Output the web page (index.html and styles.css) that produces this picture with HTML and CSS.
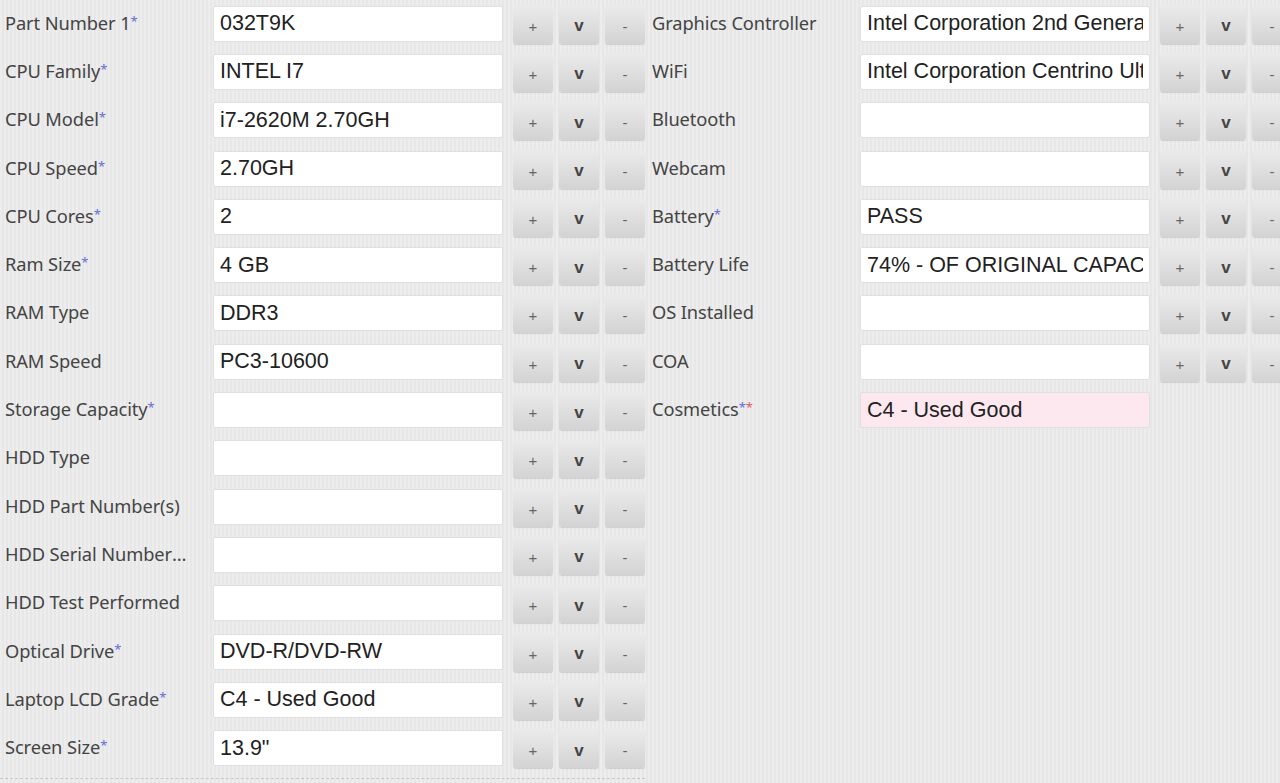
FILE: index.html
```html
<!DOCTYPE html>
<html lang="en">
<head>
    <meta charset="UTF-8">
    <title>Laptop Specs</title>
    <link rel="stylesheet" href="styles.css">
</head>
<body>
    <div class="form">
        <div class="column left">
            <div class="row"><label>Part Number 1<span class="req">*</span></label><input type="text" value="032T9K"><div class="btns"><button>+</button><button class="v">v</button><button>-</button></div></div>
            <div class="row"><label>CPU Family<span class="req">*</span></label><input type="text" value="INTEL I7"><div class="btns"><button>+</button><button class="v">v</button><button>-</button></div></div>
            <div class="row"><label>CPU Model<span class="req">*</span></label><input type="text" value="i7-2620M 2.70GH"><div class="btns"><button>+</button><button class="v">v</button><button>-</button></div></div>
            <div class="row"><label>CPU Speed<span class="req">*</span></label><input type="text" value="2.70GH"><div class="btns"><button>+</button><button class="v">v</button><button>-</button></div></div>
            <div class="row"><label>CPU Cores<span class="req">*</span></label><input type="text" value="2"><div class="btns"><button>+</button><button class="v">v</button><button>-</button></div></div>
            <div class="row"><label>Ram Size<span class="req">*</span></label><input type="text" value="4 GB"><div class="btns"><button>+</button><button class="v">v</button><button>-</button></div></div>
            <div class="row"><label>RAM Type</label><input type="text" value="DDR3"><div class="btns"><button>+</button><button class="v">v</button><button>-</button></div></div>
            <div class="row"><label>RAM Speed</label><input type="text" value="PC3-10600"><div class="btns"><button>+</button><button class="v">v</button><button>-</button></div></div>
            <div class="row"><label>Storage Capacity<span class="req">*</span></label><input type="text" value=""><div class="btns"><button>+</button><button class="v">v</button><button>-</button></div></div>
            <div class="row"><label>HDD Type</label><input type="text" value=""><div class="btns"><button>+</button><button class="v">v</button><button>-</button></div></div>
            <div class="row"><label>HDD Part Number(s)</label><input type="text" value=""><div class="btns"><button>+</button><button class="v">v</button><button>-</button></div></div>
            <div class="row"><label>HDD Serial Number(s)</label><input type="text" value=""><div class="btns"><button>+</button><button class="v">v</button><button>-</button></div></div>
            <div class="row"><label>HDD Test Performed</label><input type="text" value=""><div class="btns"><button>+</button><button class="v">v</button><button>-</button></div></div>
            <div class="row"><label>Optical Drive<span class="req">*</span></label><input type="text" value="DVD-R/DVD-RW"><div class="btns"><button>+</button><button class="v">v</button><button>-</button></div></div>
            <div class="row"><label>Laptop LCD Grade<span class="req">*</span></label><input type="text" value="C4 - Used Good"><div class="btns"><button>+</button><button class="v">v</button><button>-</button></div></div>
            <div class="row"><label>Screen Size<span class="req">*</span></label><input type="text" value='13.9"'><div class="btns"><button>+</button><button class="v">v</button><button>-</button></div></div>
        </div>
        <div class="column right">
            <div class="row"><label>Graphics Controller</label><input type="text" value="Intel Corporation 2nd Generation Core Processor Family"><div class="btns"><button>+</button><button class="v">v</button><button>-</button></div></div>
            <div class="row"><label>WiFi</label><input type="text" value="Intel Corporation Centrino Ultimate-N 6300"><div class="btns"><button>+</button><button class="v">v</button><button>-</button></div></div>
            <div class="row"><label>Bluetooth</label><input type="text" value=""><div class="btns"><button>+</button><button class="v">v</button><button>-</button></div></div>
            <div class="row"><label>Webcam</label><input type="text" value=""><div class="btns"><button>+</button><button class="v">v</button><button>-</button></div></div>
            <div class="row"><label>Battery<span class="req">*</span></label><input type="text" value="PASS"><div class="btns"><button>+</button><button class="v">v</button><button>-</button></div></div>
            <div class="row"><label>Battery Life</label><input type="text" value="74% - OF ORIGINAL CAPACITY"><div class="btns"><button>+</button><button class="v">v</button><button>-</button></div></div>
            <div class="row"><label>OS Installed</label><input type="text" value=""><div class="btns"><button>+</button><button class="v">v</button><button>-</button></div></div>
            <div class="row"><label>COA</label><input type="text" value=""><div class="btns"><button>+</button><button class="v">v</button><button>-</button></div></div>
            <div class="row"><label>Cosmetics<span class="req">*</span><span class="req red">*</span></label><input type="text" class="pink" value="C4 - Used Good"></div>
        </div>
    </div>
</body>
</html>
```

FILE: styles.css
```css
body {
    margin: 0;
    overflow: hidden;
    background-color: #ebebeb;
    background-image: repeating-linear-gradient(90deg, #ededed 0 2px, #e7e7e7 2px 4px);
    font-family: "Noto Sans", sans-serif;
    color: #444444;
}

.form {
    display: flex;
}

.column {
    display: flex;
    flex-direction: column;
}

.left {
    width: 645px;
    border-bottom: 1px dashed #c9c9c9;
    padding-bottom: 5px;
    align-self: flex-start;
}

.right {
    margin-left: 7px;
}

.row {
    display: flex;
    align-items: center;
    height: 48.3px;
}

label {
    flex: none;
    box-sizing: border-box;
    width: 208px;
    padding-right: 16px;
    font-size: 18.3px;
    letter-spacing: -0.1px;
    white-space: nowrap;
    overflow: hidden;
    text-overflow: ellipsis;
    margin-top: -4px;
}

.left label {
    width: 213px;
    padding-left: 5px;
    padding-right: 24px;
}

.req {
    color: #6a6ad4;
    font-size: 13px;
    vertical-align: 4px;
}

.req.red {
    color: #e05a6a;
}

input {
    flex: none;
    box-sizing: border-box;
    width: 290px;
    height: 36px;
    margin: 0;
    padding: 0 6px;
    border: 1px solid #e0e0e0;
    border-radius: 2px;
    background: #ffffff;
    font-family: "Liberation Sans", Arial, sans-serif;
    font-size: 21.5px;
    color: #222222;
    margin-top: -1px;
}

input.pink {
    background: #fde8ef;
}

.btns {
    display: flex;
    gap: 6px;
    margin-left: 10px;
}

button {
    width: 40px;
    height: 39px;
    padding: 0;
    padding-top: 4px;
    border: none;
    border-radius: 3px;
    background: linear-gradient(#ebebeb, #d3d3d3);
    box-shadow: 0 1px 1px rgba(0, 0, 0, 0.12);
    font-family: "Liberation Sans", Arial, sans-serif;
    font-size: 15px;
    color: #666666;
}

button.v {
    font-size: 17px;
    font-weight: bold;
    color: #444444;
}
```
